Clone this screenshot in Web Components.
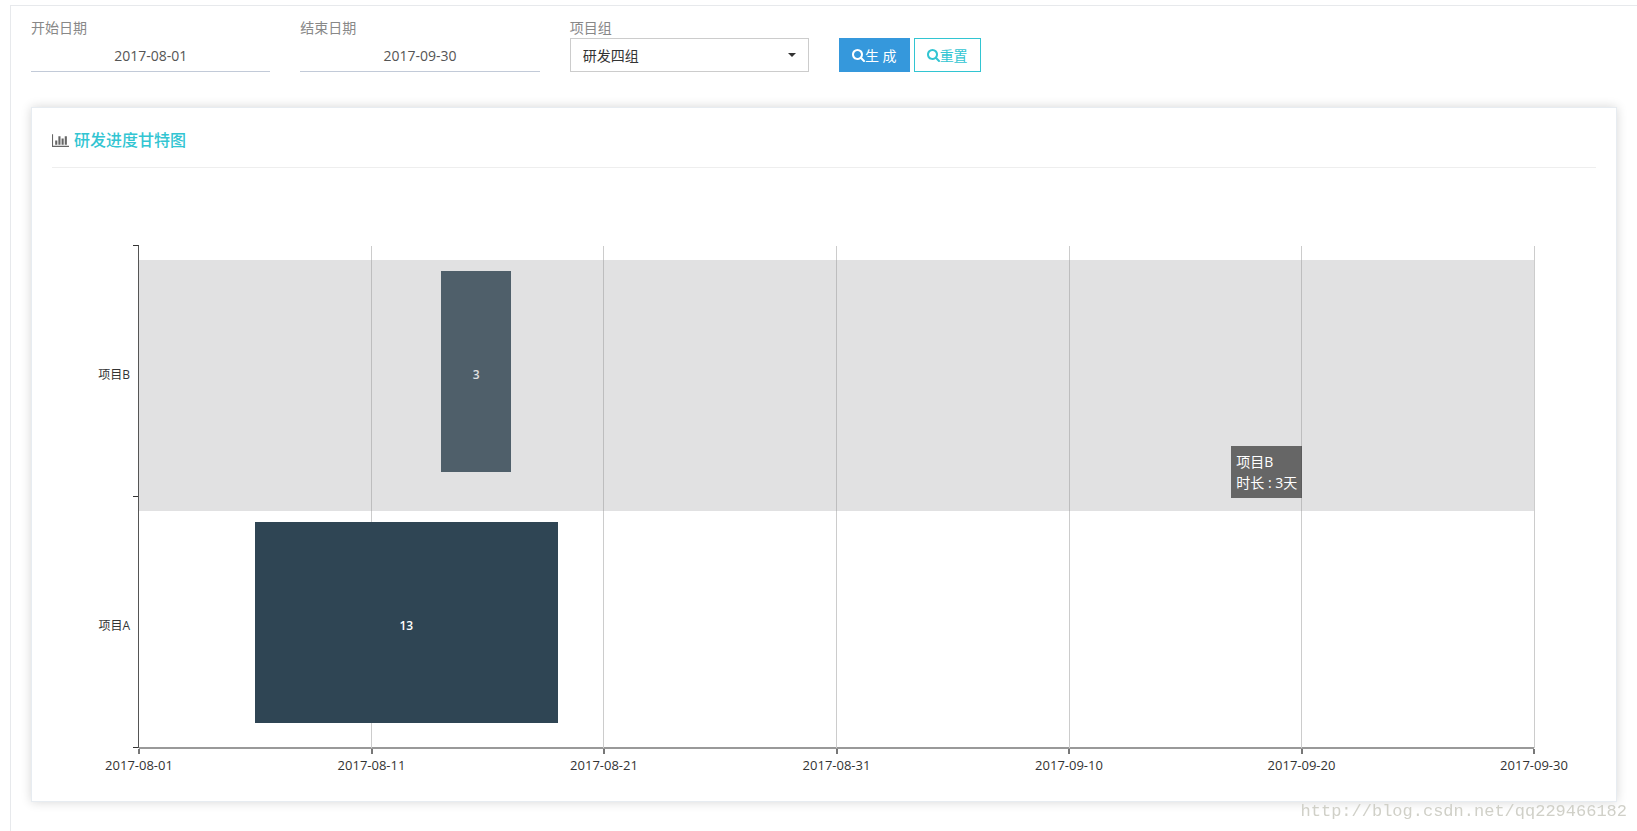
<!DOCTYPE html>
<html lang="zh-CN">
<head>
<meta charset="utf-8">
<title>研发进度甘特图</title>
<style>
  body {
    margin: 0;
    padding: 5px 0 0 10px;
    background: #fff;
    color: #333;
    font: 14px/20px "Open Sans", "Noto Sans CJK SC", sans-serif;
  }
</style>
</head>
<body>

<report-page>
  <filter-bar slot="filters">
    <date-field label="开始日期" value="2017-08-01"></date-field>
    <date-field label="结束日期" value="2017-09-30"></date-field>
    <select-field label="项目组" options="研发四组"></select-field>
    <div slot="actions">
      <icon-button variant="primary">生 成</icon-button>
      <icon-button variant="outline">重置</icon-button>
    </div>
  </filter-bar>
  <panel-card heading="研发进度甘特图">
    <gantt-chart start="2017-08-01" days="60" step="10" active="项目B">
      <gantt-task name="项目B" start="2017-08-14" days="3"></gantt-task>
      <gantt-task name="项目A" start="2017-08-06" days="13"></gantt-task>
    </gantt-chart>
  </panel-card>
</report-page>
<water-mark>http://blog.csdn.net/qq229466182</water-mark>

<script>
class BaseElement extends HTMLElement {
  constructor() {
    super();
    this.attachShadow({ mode: 'open' });
  }
  connectedCallback() {
    this.shadowRoot.innerHTML = this.render();
  }
  attr(name) {
    return this.getAttribute(name) || '';
  }
}

customElements.define('report-page', class extends BaseElement {
  render() {
    return `
      <style>
        :host { display: block; }
        main {
          box-sizing: border-box;
          min-height: calc(100vh - 5px);
          padding: 12px 20px 28px;
          border: solid #e7e9ec;
          border-width: 1px 0 0 1px;
        }
        slot[name="filters"] { display: block; margin-bottom: 35px; }
      </style>
      <main><slot name="filters"></slot><slot></slot></main>`;
  }
});

customElements.define('filter-bar', class extends BaseElement {
  render() {
    return `
      <style>
        :host { display: block; }
        form {
          display: grid;
          grid-template-columns: repeat(6, minmax(150px, 1fr));
          gap: 30px;
          align-items: end;
        }
        ::slotted(div) { display: flex; gap: 4px; }
      </style>
      <form><slot></slot><slot name="actions"></slot></form>`;
  }
});

const fieldStyles = `
  :host { display: block; }
  label { display: block; color: #888; }
  input, select {
    box-sizing: border-box;
    display: block;
    width: 100%;
    height: 34px;
    margin: 0;
    border-radius: 0;
    background: #fff;
    font: inherit;
    outline: none;
  }
`;

customElements.define('date-field', class extends BaseElement {
  render() {
    return `
      <style>
        ${fieldStyles}
        input {
          padding: 8px 12px 6px;
          border: 0;
          border-bottom: 1px solid #c2cad8;
          color: #555;
          text-align: center;
        }
      </style>
      <label for="date">${this.attr('label')}</label>
      <input id="date" type="text" value="${this.attr('value')}">`;
  }
});

customElements.define('select-field', class extends BaseElement {
  render() {
    const options = this.attr('options').split(',').map(o => `<option>${o}</option>`).join('');
    return `
      <style>
        ${fieldStyles}
        .box { position: relative; }
        select {
          appearance: none;
          padding: 2px 30px 0 12px;
          border: 1px solid #ccc;
          color: #333;
        }
        .caret {
          position: absolute;
          right: 13px;
          top: 15px;
          border: 4px solid transparent;
          border-top-color: #333;
          border-bottom: 0;
          pointer-events: none;
        }
      </style>
      <label for="choice">${this.attr('label')}</label>
      <div class="box">
        <select id="choice">${options}</select>
        <span class="caret"></span>
      </div>`;
  }
});

customElements.define('icon-button', class extends BaseElement {
  render() {
    return `
      <style>
        :host { display: block; }
        button {
          box-sizing: border-box;
          display: flex;
          align-items: center;
          height: 34px;
          padding: 0 12px;
          border: 1px solid #3598dc;
          background: #3598dc;
          color: #fff;
          font: inherit;
          white-space: nowrap;
          cursor: pointer;
        }
        :host([variant="outline"]) button {
          border-color: #32c5d2;
          background: #fff;
          color: #32c5d2;
        }
        span { padding-top: 2px; }
        svg { display: block; width: 13px; height: 13px; fill: currentColor; }
      </style>
      <button type="button">
        <svg viewBox="64 128 1664 1664" aria-hidden="true"><path d="M1216 832q0-185-131.500-316.500t-316.500-131.500-316.500 131.500-131.500 316.500 131.500 316.500 316.500 131.500 316.500-131.500 131.500-316.500zm512 832q0 52-38 90t-90 38q-54 0-90-38l-343-342q-179 124-399 124-143 0-273.500-55.500t-225-150-150-225-55.500-273.500 55.500-273.500 150-225 225-150 273.500-55.500 273.500 55.500 225 150 150 225 55.500 273.500q0 220-124 399l343 343q37 37 37 90z"/></svg>
        <span><slot></slot></span>
      </button>`;
  }
});

customElements.define('panel-card', class extends BaseElement {
  render() {
    return `
      <style>
        :host {
          display: block;
          border: 1px solid #e7ecf1;
          background: #fff;
          box-shadow: 0 0 10px rgba(0, 0, 0, .16);
        }
        header {
          display: flex;
          align-items: center;
          gap: 5px;
          margin: 0 20px;
          padding: 22px 0 17px;
          border-bottom: 1px solid #eee;
        }
        h2 {
          margin: 0;
          color: #32c5d2;
          font-size: 16px;
          line-height: 20px;
          font-weight: 500;
        }
        svg { display: block; width: 17px; height: 15px; fill: #666; }
      </style>
      <header>
        <svg viewBox="0 0 2048 1792" aria-hidden="true"><path d="M640 896v512H384V896h256zm384-512v1024H768V384h256zm1024 1152v128H0V128h128v1408h1920zm-640-896v768h-256V640h256zm384-256v1024h-256V384h256z"/></svg>
        <h2>${this.attr('heading')}</h2>
      </header>
      <slot></slot>`;
  }
});

customElements.define('gantt-task', class extends HTMLElement {});

customElements.define('gantt-chart', class extends BaseElement {
  render() {
    const dayMs = 86400000;
    const start = Date.parse(this.attr('start'));
    const days = Number(this.attr('days'));
    const step = Number(this.attr('step'));
    const tasks = [...this.querySelectorAll('gantt-task')].map(t => ({
      name: t.getAttribute('name'),
      offset: (Date.parse(t.getAttribute('start')) - start) / dayMs,
      days: Number(t.getAttribute('days'))
    }));
    const active = tasks.find(t => t.name === this.attr('active'));
    const dates = [];
    for (let d = 0; d <= days; d += step) {
      dates.push(new Date(start + d * dayMs).toISOString().slice(0, 10));
    }
    return `
      <style>
        :host { display: block; padding: 78px 82px 28px 0; font-size: 12px; line-height: 16px; }
        .chart { display: grid; grid-template-columns: 101px 6px 1fr; }
        .names, .ticks { display: grid; grid-auto-rows: 251px; }
        .names span {
          display: flex;
          align-items: center;
          justify-content: flex-end;
          padding: 6px 3px 0 0;
        }
        .ticks { margin-top: -1px; border-right: 1px solid #555; border-top: 1px solid #333; }
        .ticks i { border-bottom: 1px solid #333; }
        .plot {
          position: relative;
          display: grid;
          grid-template-columns: repeat(${days}, 1fr);
          grid-auto-rows: 251px;
        }
        .line { border-right: 1px solid #ccc; }
        .lines {
          grid-column: 1 / -1;
          grid-row: 1 / span ${tasks.length};
          display: grid;
          grid-template-columns: repeat(${days / step}, 1fr);
          margin-right: -1px;
        }
        .bar {
          display: flex;
          align-items: center;
          justify-content: center;
          margin: 25px 0;
          padding-top: 6px;
          background: #2f4554;
          color: #fff;
          font-weight: 600;
        }
        .band {
          position: absolute;
          top: 14px;
          left: 0;
          right: 0;
          height: 50%;
          background: rgba(154, 156, 158, .3);
        }
        .tip {
          position: absolute;
          top: 200px;
          left: 78.3%;
          padding: 5px;
          background: rgba(50, 50, 50, .7);
          color: #fff;
          font-size: 14px;
          line-height: 21px;
          white-space: nowrap;
        }
        .dates {
          grid-column: 3;
          display: flex;
          justify-content: space-between;
          margin-top: -1px;
          border-top: 2px solid #999;
          font-size: 13px;
        }
        .dates span {
          display: flex;
          flex-direction: column;
          align-items: center;
          gap: 3px;
          width: 0;
          white-space: nowrap;
        }
        .dates span::before { content: ""; width: 2px; height: 5px; background: #777; }
      </style>
      <div class="chart">
        <div class="names">${tasks.map(t => `<span>${t.name}</span>`).join('')}</div>
        <div class="ticks">${tasks.map(() => '<i></i>').join('')}</div>
        <div class="plot">
          <div class="lines">${dates.slice(1).map(() => '<div class="line"></div>').join('')}</div>
          ${tasks.map((t, i) => `<div class="bar" style="grid-row:${i + 1};grid-column:${t.offset + 1} / span ${t.days}">${t.days}</div>`).join('')}
          <div class="band"></div>
          <div class="tip" role="tooltip">${active.name}<br>时长 : ${active.days}天</div>
        </div>
        <div class="dates">${dates.map(d => `<span>${d}</span>`).join('')}</div>
      </div>`;
  }
});

customElements.define('water-mark', class extends BaseElement {
  render() {
    return `
      <style>
        :host {
          position: fixed;
          right: 10px;
          bottom: 9px;
          color: #d0d0c8;
          font: 17px/20px "Liberation Mono", monospace;
          pointer-events: none;
        }
      </style>
      <slot></slot>`;
  }
});
</script>
</body>
</html>
